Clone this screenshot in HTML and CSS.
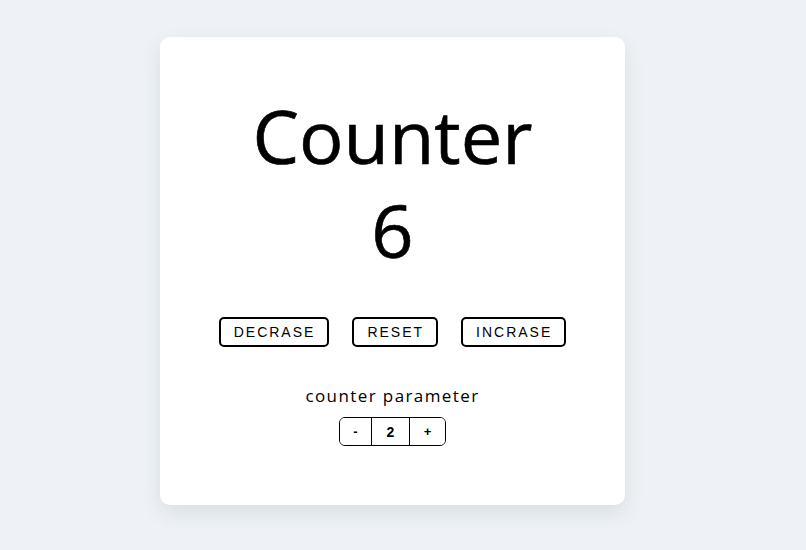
FILE: index.html
```html
<!DOCTYPE html>
<html>
<head>
<meta charset="utf-8">
<link rel="stylesheet" href="styles.css">
</head>
<body>
  <main class="card">
    <h1 class="title">Counter</h1>
    <div class="value">6</div>
    <div class="actions">
      <button class="btn">Decrase</button>
      <button class="btn">Reset</button>
      <button class="btn">Incrase</button>
    </div>
    <p class="param-label">counter parameter</p>
    <div class="stepper">
      <button class="step step-minus">-</button>
      <span class="step step-value">2</span>
      <button class="step step-plus">+</button>
    </div>
  </main>
</body>
</html>
```

FILE: styles.css
```css
* { box-sizing: border-box; }
html, body { margin: 0; }
body {
  background: #eef2f6;
  padding: 37px 0 0 160px;
  font-family: "Open Sans", sans-serif;
  color: #000;
  height: 550px;
  overflow: hidden;
}
.card {
  width: 465px;
  height: 468px;
  background: #fff;
  border-radius: 10px;
  box-shadow: 0 8px 20px rgba(40, 60, 80, 0.10);
  display: flex;
  flex-direction: column;
  align-items: center;
  padding-top: 52px;
}
.title, .value {
  margin: 0;
  font-size: 74px;
  font-weight: 400;
  line-height: 94px;
  -webkit-text-stroke: 0.6px #000;
}
.actions {
  display: flex;
  gap: 23px;
  margin-top: 40px;
}
.btn {
  font-family: "Liberation Sans", Arial, sans-serif;
  font-size: 14px;
  line-height: 16px;
  letter-spacing: 2px;
  text-transform: uppercase;
  background: #fff;
  color: #000;
  border: 2px solid #000;
  border-radius: 5px;
  padding: 5px 12px 5px 13px;
  cursor: pointer;
}
.param-label {
  margin: 37px 0 0;
  font-size: 17px;
  letter-spacing: 1.4px;
  line-height: 23px;
}
.stepper {
  display: flex;
  margin-top: 10px;
  height: 29px;
  border: 1px solid #000;
  border-radius: 6px;
  overflow: hidden;
}
.step {
  display: flex;
  align-items: center;
  justify-content: center;
  font-family: "Liberation Sans", Arial, sans-serif;
  font-weight: 700;
  font-size: 13px;
  background: #fff;
  color: #000;
  border: 0;
  padding: 0;
}
.step-minus { width: 32px; border-right: 1px solid #000; }
.step-value { width: 38px; border-right: 1px solid #000; font-size: 14px; }
.step-plus { width: 35px; }
```
